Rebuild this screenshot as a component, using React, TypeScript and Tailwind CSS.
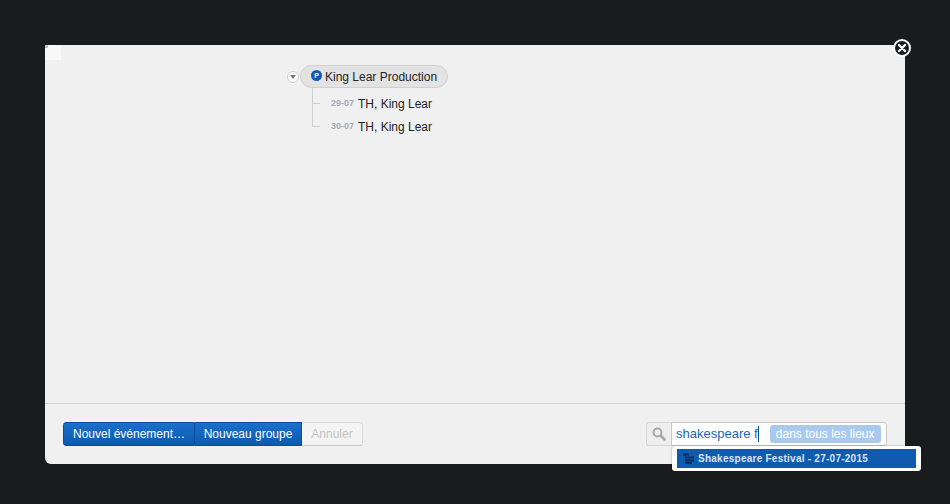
const font = { fontFamily: '"Liberation Sans", Arial, sans-serif' };

function TreeRow({ date, label, last }: { date: string; label: string; last?: boolean }) {
  return (
    <div className="relative flex h-[23px] items-center pl-[19px]">
      <span className={`absolute left-0 w-px bg-[#cfcfcf] ${last ? "top-0 h-[12px]" : "top-[-4px] h-[27px]"}`} />
      <span className="absolute left-0 top-[11px] h-px w-[8px] bg-[#cfcfcf]" />
      <span className="w-[24px] text-[9px] font-bold text-[#a3aabb]">{date}</span>
      <span className="ml-[3px] text-[12px] text-[#222]">{label}</span>
    </div>
  );
}

export default function App() {
  return (
    <div className="h-[504px] w-[950px] overflow-hidden bg-[#1a1b1d] pl-[45px] pt-[45px]" style={font}>
      <div className="relative flex h-[419px] w-[860px] flex-col rounded-bl-[6px] rounded-br-[6px] bg-[#f0f0f0]">
        <div className="absolute left-0 top-0 h-[15px] w-[16px] bg-[#f8f8f8]" />
        <div className="absolute left-0 top-0 h-[3px] w-[3px] bg-[#c4c4c4]" />

        {/* close */}
        <button className="absolute right-[-6px] top-[-6px] flex h-[18px] w-[18px] items-center justify-center rounded-full border-2 border-white bg-[#1b1c1e]">
          <svg width="10" height="10" viewBox="0 0 10 10">
            <path d="M2 2 L8 8 M8 2 L2 8" stroke="#fff" strokeWidth="2.4" strokeLinecap="round" />
          </svg>
        </button>

        {/* tree */}
        <div className="flex-1 pl-[242px] pt-[20px]">
          <div className="flex items-center">
            <span className="mr-[1px] flex h-[12px] w-[12px] items-center justify-center rounded-full border border-[#cfcfcf] bg-white">
              <span className="h-0 w-0 border-x-[3px] border-t-[4px] border-x-transparent border-t-[#777]" />
            </span>
            <div className="flex h-[23px] w-[148px] items-center rounded-full border border-[#d0d0d0] bg-[#e3e3e3] pl-[10px]">
              <span className="mb-[3px] flex h-[11px] w-[11px] items-center justify-center rounded-full bg-[#0f5bb5] text-[7px] font-bold leading-none text-white">
                P
              </span>
              <span className="ml-[3px] text-[12px] text-[#222]">King Lear Production</span>
            </div>
          </div>
          <div className="ml-[25px] mt-[4px]">
            <TreeRow date="29-07" label="TH, King Lear" />
            <TreeRow date="30-07" label="TH, King Lear" last />
          </div>
        </div>

        {/* footer */}
        <div className="flex h-[61px] items-start justify-between border-t border-[#d4d4d4] px-[18px] pt-[18px]">
          <div className="flex h-[24px] text-[12px]">
            <button className="h-full w-[132px] rounded-l-[3px] border border-[#0c4c98] bg-gradient-to-b from-[#1a6fca] to-[#0d5ab0] text-white">
              Nouvel événement…
            </button>
            <button className="h-full w-[107px] border border-l-0 border-[#0c4c98] bg-gradient-to-b from-[#1a6fca] to-[#0d5ab0] text-white">
              Nouveau groupe
            </button>
            <button className="h-full w-[61px] rounded-r-[3px] border border-l-0 border-[#dadada] border-b-[#c8c8c8] bg-[#f4f4f4] text-[#c2c2c2]">
              Annuler
            </button>
          </div>
          <div className="flex h-[24px]">
            <div className="flex w-[25px] items-center justify-center rounded-l-[3px] border border-r-0 border-[#d6d6d6] bg-[#eeeeee]">
              <svg width="14" height="14" viewBox="0 0 14 14" fill="none" stroke="#a8a8a8">
                <circle cx="5.5" cy="5.5" r="4" strokeWidth="2" />
                <path d="M8.5 8.5 L12.5 12.5" strokeWidth="2.6" strokeLinecap="round" />
              </svg>
            </div>
            <div className="flex w-[216px] items-center rounded-r-[3px] border border-[#c8c8c8] bg-white pl-[4px]">
              <span className="text-[13px] text-[#1c63b7]">shakespeare f</span>
              <span className="h-[16px] w-px bg-[#0d4f9e]" />
              <span className="ml-[11px] flex h-[18px] w-[111px] items-center justify-center rounded-[3px] bg-[#a9caee] text-[12px] text-white">
                dans tous les lieux
              </span>
            </div>
          </div>
        </div>

        {/* autocomplete */}
        <div className="absolute left-[627px] top-[401px] h-[25px] w-[249px] rounded-[3px] bg-white px-[5px] py-[3px] shadow-[0_0_2px_rgba(0,0,0,0.4)]">
          <div className="flex h-[19px] items-center bg-[#0f5bb0] pl-[6px]">
            <svg width="12" height="11" viewBox="0 0 12 11" fill="#0b2f63">
              <rect x="0" y="0.5" width="6" height="2" />
              <rect x="2" y="0.5" width="1" height="10" />
              <rect x="3" y="3.5" width="8" height="2" />
              <rect x="3" y="6.5" width="8" height="2" />
              <rect x="3" y="9" width="6" height="2" />
            </svg>
            <span className="ml-[3px] text-[10px] font-bold tracking-[0.25px] text-[#dbe6f5]">
              Shakespeare Festival - 27-07-2015
            </span>
          </div>
        </div>
      </div>
    </div>
  );
}
